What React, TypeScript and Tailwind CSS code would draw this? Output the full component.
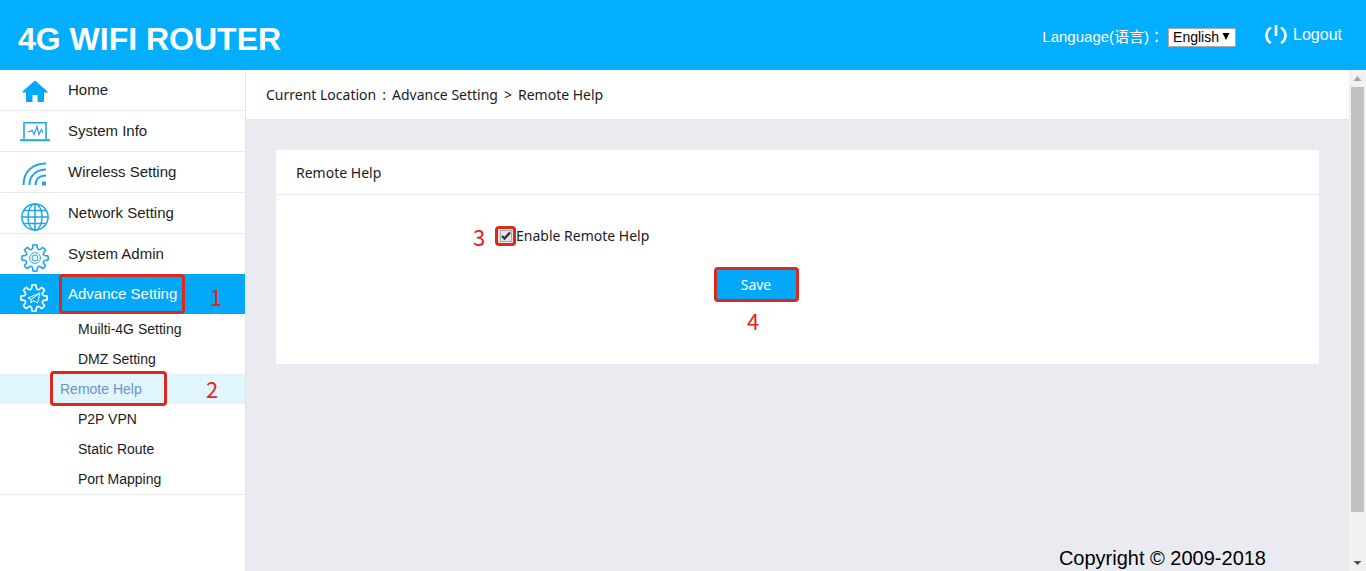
import type { ReactNode } from "react";

const GEAR = (() => {
  const teeth = 8;
  const pts: string[] = [];
  for (let i = 0; i < teeth; i++) {
    const base = (i * 2 * Math.PI) / teeth - Math.PI / 2;
    const at = (r: number, a: number) => `${(14 + r * Math.cos(base + a)).toFixed(2)} ${(14 + r * Math.sin(base + a)).toFixed(2)}`;
    pts.push(`${i === 0 ? "M" : "L"}${at(12.9, -0.17)}`, `Q${at(13.8, 0)} ${at(12.9, 0.17)}`, `L${at(11, 0.2)}`, `Q${at(7.6, 0.3927)} ${at(11, 0.5854)}`);
  }
  return pts.join(" ") + "Z";
})();

function HomeIcon() {
  return (
    <svg width="28" height="28" viewBox="0 0 28 28" fill="#00a8f8" aria-hidden="true">
      <path d="M14 2.500 1.500 13.500c-.4.500 0 1 .5 1H5v8.500a1 1 0 0 0 1 1h5.500v-7h5v7H22a1 1 0 0 0 1-1v-8.500h3c.600 0 .900-.500.500-1z" />
    </svg>
  );
}

function InfoIcon() {
  return (
    <svg width="30" height="28" viewBox="0 0 30 28" fill="none" stroke="#1ea5e8" aria-hidden="true">
      <path d="M4 20V3.800h22V20" strokeWidth="1.600" />
      <path d="M0 21.200h30" strokeWidth="2" />
      <path d="M7.500 12.500h3l1.500-1.500 2 4.500 3-8 2 8 2.500-5 1.500 3" strokeWidth="1.200" />
    </svg>
  );
}

function WirelessIcon() {
  return (
    <svg width="28" height="28" viewBox="0 0 28 28" fill="none" stroke="#1ea5e8" strokeWidth="2" aria-hidden="true">
      <path d="M2.500 25C2.500 12 11 3.500 25 3.500M8.500 25C8.500 16 15 9.500 25 9.500M14.500 25C14.500 19.500 18 15.500 25 15.500" />
      <rect x="21" y="21.500" width="4" height="4" fill="#1ea5e8" stroke="none" />
    </svg>
  );
}

function GlobeIcon() {
  return (
    <svg width="28" height="28" viewBox="0 0 28 28" fill="none" stroke="#1ea5e8" strokeWidth="1.500" aria-hidden="true">
      <circle cx="14" cy="14" r="13.100" />
      <ellipse cx="14" cy="14" rx="7" ry="13.100" />
      <path d="M14 1v26M1 14h26M3 7.500h22M3 20.500h22" />
    </svg>
  );
}

function GearIcon() {
  return (
    <svg width="28" height="28" viewBox="0 0 28 28" fill="none" stroke="#1ea5e8" strokeWidth="1.600" aria-hidden="true">
      <path d={GEAR} />
      <circle cx="14" cy="14" r="5.400" strokeWidth="1" />
      <circle cx="14" cy="14" r="3" strokeWidth="1" />
    </svg>
  );
}

function AdvanceIcon() {
  return (
    <svg width="28" height="28" viewBox="0 0 28 28" fill="none" stroke="#fff" strokeWidth="1.700" aria-hidden="true">
      <path d={GEAR} />
      <path d="m8 14 12-5-2.500 10-4.500-2.500-2 2.500v-3.500zM20 9l-9 6.500" strokeWidth="1" />
    </svg>
  );
}

function Mark({ children, className }: { children: ReactNode; className: string }) {
  return <span className={`font-['Noto_Sans_CJK_SC',sans-serif] text-[22px] leading-5 text-[#e8211d] ${className}`}>{children}</span>;
}

const items = [
  { label: "Home", icon: <HomeIcon /> },
  { label: "System Info", icon: <InfoIcon /> },
  { label: "Wireless Setting", icon: <WirelessIcon /> },
  { label: "Network Setting", icon: <GlobeIcon /> },
  { label: "System Admin", icon: <GearIcon /> },
];

export default function App() {
  return (
    <div className="flex h-screen flex-col overflow-hidden bg-white font-['Liberation_Sans',Arial,'Noto_Sans_CJK_TC',sans-serif] text-[15px] text-[#1c1c1c]">
      <header className="flex h-[70px] shrink-0 items-center justify-between bg-[#03aeff] pr-6 pl-[18px] text-white">
        <h1 className="pt-2 text-[32px] leading-10 font-bold">4G WIFI ROUTER</h1>
        <div className="flex items-center">
          <label htmlFor="language" lang="zh-TW" className="pt-1">Language(语言)：</label>
          <select id="language" className="mt-1 ml-1 h-[19px] w-[68px] appearance-none border border-[#a9a9a9] bg-white pl-1 text-[14px] leading-4 text-black">
            <option>English</option>
          </select>
          <svg className="pointer-events-none -ml-[14px] mt-1" width="8" height="8" viewBox="0 0 8 8" fill="#000" aria-hidden="true"><path d="M.5 0h7L4 7z" /></svg>
          <a href="#logout" className="ml-[35px] flex items-center gap-1 text-[16px]">
            <svg width="24" height="22" viewBox="0 0 24 22" fill="none" stroke="#fff" strokeWidth="2.600" aria-hidden="true">
              <path d="M11 1v11M6 3.500C0 7.500 0 15.500 6 19M16 3.500c6 4 6 12 0 15.500" />
            </svg>
            Logout
          </a>
        </div>
      </header>
      <div className="flex min-h-0 flex-1">
        <nav className="w-[246px] shrink-0 border-r border-[#e3e5ea]">
          <ul>
            {items.map((item, i) => (
              <li key={item.label} className={i < 4 ? "border-b border-[#e9ebf2]" : ""}>
                <a href="#menu" className="flex h-10 items-center">
                  <span className={`flex w-[68px] justify-center pl-0.5 ${i < 3 ? "pt-1" : "pt-2"}`}>{item.icon}</span>
                  {item.label}
                </a>
              </li>
            ))}
            <li className="border-b border-[#e9ebf2]">
              <a href="#advance" className="relative flex h-10 items-center bg-[#03a9f8] text-white">
                <span className="flex w-[68px] justify-center pt-2"><AdvanceIcon /></span>
                Advance Setting
                <span className="absolute top-0 left-[59px] h-10 w-[126px] rounded-sm border-3 border-[#db291f]" />
                <Mark className="absolute top-3 left-[210px]">1</Mark>
              </a>
              <ul className="text-[14px]">
                <li><a href="#multi" className="flex h-[30px] items-center pl-[78px]">Muilti-4G Setting</a></li>
                <li><a href="#dmz" className="flex h-[30px] items-center pl-[78px]">DMZ Setting</a></li>
                <li>
                  <a href="#remote" className="relative flex h-[30px] items-center bg-[#e1f5fe] pl-[60px] text-[#6993c8]">
                    Remote Help
                    <span className="absolute -top-[3px] left-[50px] h-[35px] w-[117px] rounded-sm border-3 border-[#db291f]" />
                    <Mark className="absolute top-1 left-[206px]">2</Mark>
                  </a>
                </li>
                <li><a href="#vpn" className="flex h-[30px] items-center pl-[78px]">P2P VPN</a></li>
                <li><a href="#route" className="flex h-[30px] items-center pl-[78px]">Static Route</a></li>
                <li><a href="#port" className="flex h-[30px] items-center pl-[78px]">Port Mapping</a></li>
              </ul>
            </li>
          </ul>
        </nav>
        <main className="flex min-w-0 flex-1 flex-col bg-[#eaebf0] font-['Noto_Sans',sans-serif] text-[14px]">
          <div className="flex h-[50px] items-center gap-1.5 border-b border-[#e3e5ea] bg-white pl-5">
            <span>Current Location</span>
            <span>:</span>
            <span>Advance Setting</span>
            <span>&gt;</span>
            <span>Remote Help</span>
          </div>
          <section className="mx-[30px] mt-[30px] h-[214px] bg-white">
            <h2 className="flex h-[45px] items-center border-b border-[#e6e8ee] pl-5">Remote Help</h2>
            <div className="grid grid-cols-[196px_1fr] items-center pt-[30px]">
              <Mark className="pl-[197px]">3</Mark>
              <label className="flex items-center pl-[23px]">
                <span className="relative flex h-5 w-[21px] items-center justify-center rounded-sm border-3 border-[#db291f] bg-[#e2e4e8]">
                  <input type="checkbox" defaultChecked className="h-3 w-3 appearance-none border border-[#aaa]" />
                  <svg className="pointer-events-none absolute" width="10" height="10" viewBox="0 0 10 10" fill="none" stroke="#333" strokeWidth="2.400" aria-hidden="true"><path d="m1 5 2.500 2.500L9 1.500" /></svg>
                </span>
                Enable Remote Help
              </label>
            </div>
            <div className="mt-[21px] mr-[83px] flex flex-col items-center">
              <button className="h-[35px] w-[85px] rounded-sm border-3 border-[#db291f] bg-[#03a9f8] text-white">Save</button>
              <Mark className="mt-2 mr-1.5">4</Mark>
            </div>
          </section>
          <footer className="mt-auto mr-[83px] self-end font-['Liberation_Sans',Arial,sans-serif] text-[20px] leading-[26px] text-black">Copyright © 2009-2018</footer>
        </main>
        <div className="flex w-[17px] shrink-0 flex-col items-center bg-[#f1f1f1]" aria-hidden="true">
          <svg width="17" height="17" viewBox="0 0 17 17" fill="#a3a3a3"><path d="m8.500 6 4 5h-8z" /></svg>
          <div className="w-[13px] flex-1 bg-[#c1c1c1]" />
          <div className="h-[42px]" />
          <svg width="17" height="17" viewBox="0 0 17 17" fill="#505050"><path d="m8.500 11-4-4h8z" /></svg>
        </div>
      </div>
    </div>
  );
}
